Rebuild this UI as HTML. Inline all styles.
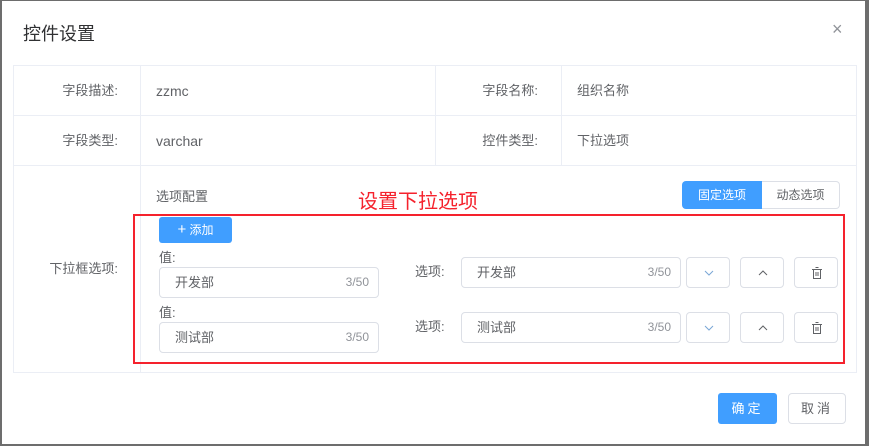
<!DOCTYPE html><html><head><meta charset="utf-8"><style>
*{box-sizing:border-box;margin:0;padding:0}
body{width:869px;height:446px;background:#6d6d6d;position:relative;overflow:hidden;font-family:"Liberation Sans","Noto Sans CJK SC",sans-serif;font-size:13px;color:#606266;line-height:16px}
.a{position:absolute;line-height:16px}
#dlg{left:2px;top:1px;width:863px;height:443px;background:#fff}
.ln{background:#ebeef5}
.lab{text-align:right;color:#606266}
.inp{border:1px solid #dcdfe6;border-radius:4px;background:#fff}
.inp span{position:absolute;top:0;line-height:29px}
.btn{border:1px solid #dcdfe6;border-radius:4px;background:#fff}
</style></head><body>
<div id="dlg" class="a"></div>
<div class="a" style="left:23px;top:24px;font-size:18px;line-height:20px;color:#303133">控件设置</div>
<div class="a" style="left:832px;top:19px;font-size:18px;line-height:20px;color:#909399">×</div>
<div class="a" style="left:13px;top:65px;width:844px;height:308px;border:1px solid #ebeef5"></div>
<div class="a ln" style="left:13px;top:115px;width:844px;height:1px"></div>
<div class="a ln" style="left:13px;top:165px;width:844px;height:1px"></div>
<div class="a ln" style="left:140px;top:65px;width:1px;height:308px"></div>
<div class="a ln" style="left:435px;top:65px;width:1px;height:100px"></div>
<div class="a ln" style="left:561px;top:65px;width:1px;height:100px"></div>
<div class="a lab" style="left:20px;top:83px;width:98px">字段描述:</div>
<div class="a" style="left:156px;top:83px;font-size:14px">zzmc</div>
<div class="a lab" style="left:440px;top:83px;width:98px">字段名称:</div>
<div class="a" style="left:577px;top:83px">组织名称</div>
<div class="a lab" style="left:20px;top:133px;width:98px">字段类型:</div>
<div class="a" style="left:156px;top:133px;font-size:14px">varchar</div>
<div class="a lab" style="left:440px;top:133px;width:98px">控件类型:</div>
<div class="a" style="left:577px;top:133px">下拉选项</div>
<div class="a lab" style="left:20px;top:261px;width:98px">下拉框选项:</div>
<div class="a" style="left:156px;top:189px">选项配置</div>
<div class="a" style="left:358px;top:191px;font-size:20px;line-height:22px;color:#f5222d">设置下拉选项</div>
<div class="a" style="left:682px;top:181px;width:80px;height:28px;background:#409eff;border-radius:4px 0 0 4px;color:#fff;font-size:12px;text-align:center;line-height:28px">固定选项</div>
<div class="a" style="left:762px;top:181px;width:78px;height:28px;border:1px solid #dcdfe6;border-left:none;border-radius:0 4px 4px 0;font-size:12px;text-align:center;line-height:26px">动态选项</div>
<div class="a" style="left:133px;top:214px;width:712px;height:150px;border:2.5px solid #f5222d"></div>
<div class="a" style="left:159px;top:217px;width:73px;height:26px;background:#409eff;border-radius:3px;color:#fff;font-size:12px;line-height:26px;text-align:center"><span style="font-size:15px">+</span> 添加</div>
<div class="a" style="left:159px;top:250px">值:</div>
<div class="a inp" style="left:159px;top:267px;width:220px;height:31px"><span style="left:15px">开发部</span><span style="right:9px;color:#909399;font-size:12px">3/50</span></div>
<div class="a" style="left:159px;top:305px">值:</div>
<div class="a inp" style="left:159px;top:322px;width:220px;height:31px"><span style="left:15px">测试部</span><span style="right:9px;color:#909399;font-size:12px">3/50</span></div>
<div class="a" style="left:415px;top:264px">选项:</div>
<div class="a inp" style="left:461px;top:257px;width:220px;height:31px"><span style="left:15px">开发部</span><span style="right:9px;color:#909399;font-size:12px">3/50</span></div>
<div class="a" style="left:415px;top:319px">选项:</div>
<div class="a inp" style="left:461px;top:312px;width:220px;height:31px"><span style="left:15px">测试部</span><span style="right:9px;color:#909399;font-size:12px">3/50</span></div>
<div class="a btn" style="left:686px;top:257px;width:44px;height:31px"><svg class="a" style="left:17px;top:11px" width="10" height="8"><path d="M1 2l4 4 4-4" stroke="#7aa6d6" fill="none"/></svg></div>
<div class="a btn" style="left:740px;top:257px;width:44px;height:31px"><svg class="a" style="left:17px;top:11px" width="10" height="8"><path d="M1 6l4-4 4 4" stroke="#606266" fill="none"/></svg></div>
<div class="a btn" style="left:794px;top:257px;width:44px;height:31px"><svg class="a" style="left:16px;top:8px" width="12" height="14"><path d="M4.5 1.5h3M1 3.5h10M2.5 3.5v9h7v-9M5 6v4M7 6v4" stroke="#606266" fill="none"/></svg></div>
<div class="a btn" style="left:686px;top:312px;width:44px;height:31px"><svg class="a" style="left:17px;top:11px" width="10" height="8"><path d="M1 2l4 4 4-4" stroke="#7aa6d6" fill="none"/></svg></div>
<div class="a btn" style="left:740px;top:312px;width:44px;height:31px"><svg class="a" style="left:17px;top:11px" width="10" height="8"><path d="M1 6l4-4 4 4" stroke="#606266" fill="none"/></svg></div>
<div class="a btn" style="left:794px;top:312px;width:44px;height:31px"><svg class="a" style="left:16px;top:8px" width="12" height="14"><path d="M4.5 1.5h3M1 3.5h10M2.5 3.5v9h7v-9M5 6v4M7 6v4" stroke="#606266" fill="none"/></svg></div>
<div class="a" style="left:718px;top:393px;width:59px;height:31px;background:#409eff;border-radius:3px;color:#fff;text-align:center;line-height:31px;letter-spacing:3px">确定</div>
<div class="a btn" style="left:788px;top:393px;width:58px;height:31px;text-align:center;line-height:29px;letter-spacing:3px;color:#606266">取消</div>
</body></html>
